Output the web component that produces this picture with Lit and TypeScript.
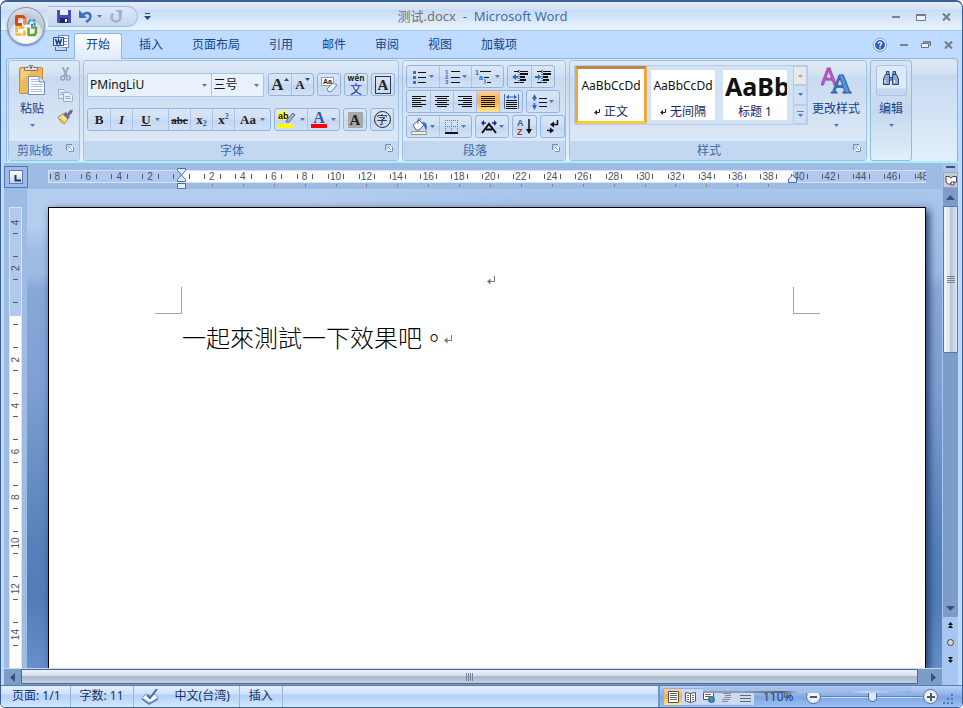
import { LitElement, html, svg, css } from "lit";
import { customElement, property } from "lit/decorators.js";

const UNIT = 15.45;
const VUNIT = 22.9;

const caret = html`<svg class="caret" width="5" height="3" viewBox="0 0 5 3" aria-hidden="true"><path d="M0 0H5L2.5 3Z" fill="#4f78b4" /></svg>`;

const returnMark = html`<svg class="mark" width="8" height="9" viewBox="0 0 8 9" aria-hidden="true"><path d="M7.5 0V5.500H2" fill="none" stroke="#777" /><path d="M0 5.500L3.500 2.500V8.500Z" fill="#777" /></svg>`;

const launcher = (name: string) => html`<button class="launcher" aria-label=${name + "选项"}>
  <svg width="8" height="8" viewBox="0 0 8 8"><path d="M0.5 6V0.5H6" fill="none" stroke="#6d8fbf" /><path d="M3 3H8V8H3Z" fill="#fff" /><path d="M3 3L6 6M7.5 3V7.5H3" fill="none" stroke="#6d8fbf" /></svg>
</button>`;

const lines = (rows: number[][], color = "#111") =>
  rows.map(([x, y, w]) => svg`<path d="M${x} ${y}.5h${w}" stroke=${color} />`);

const icon = (w: number, h: number, body: unknown) =>
  html`<svg width=${w} height=${h} viewBox="0 0 ${w} ${h}" aria-hidden="true">${body}</svg>`;

const icons = {
  office: icon(24, 24, svg`
    <g fill="none" stroke-linejoin="round">
      <path d="M11 10.500V4.500L9 2.500H2.500V10.500H8" stroke="#d9480f" stroke-width="3" />
      <path d="M10 4L11 5.500V10" stroke="#f08a3c" stroke-width="2" />
      <path d="M14.500 10.500V6.500H20.500V11H17" stroke="#2f7fd0" stroke-width="2" stroke-dasharray="3 1" />
      <path d="M10.500 13.500H2.500V20.500H10.500V16" stroke="#f4b62a" stroke-width="2.500" stroke-dasharray="6 1" />
      <path d="M14.500 13.500V21H20.500L22 18.500V13.500H17" stroke="#5fa33b" stroke-width="2.500" />
    </g>`),
  save: icon(14, 14, svg`<path d="M0 1H14V14H1L0 13Z" fill="#4a4bb5" /><path d="M3 1H11V6H3Z" fill="#e8f0ff" /><path d="M3 9H11V14H3Z" fill="#222a66" /><path d="M8 10H10V13H8Z" fill="#fff" />`),
  undo: icon(14, 13, svg`<path d="M3.500 5.500C6 2 11 2 11.500 6C11.500 9 9 11 7 12" fill="none" stroke="#3f6fc4" stroke-width="2.500" /><path d="M0 0V8H8Z" fill="#3f6fc4" />`),
  redo: icon(13, 13, svg`<path d="M3 3.500C-0.500 8 3 11.500 6 11.500C10 11.500 12 7 9 4" fill="none" stroke="#9fb2cc" stroke-width="2.500" /><path d="M5 0H12V6Z" fill="#9fb2cc" />`),
  more: icon(7, 7, svg`<path d="M1 0.500H6" stroke="#23467e" /><path d="M0 3H7L3.500 7Z" fill="#23467e" />`),
  word: icon(16, 16, svg`<path d="M5.500 0.500H15.500V12.500H5.500Z" fill="#fff" stroke="#6d86b8" /><path d="M7 3.500H14M9 6.500H14M7 9.500H14" stroke="#6d86b8" /><path d="M0.500 2.500H10.500V10.500H0.500Z" fill="#d9e6fa" stroke="#2b4f96" /><path d="M2.500 4L4 9L5.500 5L7 9L8.500 4" fill="none" stroke="#1c3f8c" stroke-width="1.500" /><path d="M2.500 12V15.500H13.500V13" fill="#c9d9f2" stroke="#4a68a5" />`),
  min: icon(8, 2, svg`<path d="M0 0H8V2H0Z" fill="#7a818e" />`),
  max: icon(10, 7, svg`<path d="M0.500 0.500H9.500V6.500H0.500Z" fill="#e8f1fc" stroke="#6b7a90" /><path d="M0 1H10" stroke="#6b7a90" stroke-width="2" />`),
  restore: icon(10, 7, svg`<path d="M2 1H9.500V5" fill="none" stroke="#6b7280" stroke-width="1.500" /><path d="M0.500 2.500H7.500V6.500H0.500Z" fill="#e8f1fc" stroke="#6b7280" />`),
  close: icon(9, 8, svg`<path d="M1 0.500L8 7.500M8 0.500L1 7.500" stroke="#757b88" stroke-width="2" />`),
  help: icon(14, 14, svg`<circle cx="7" cy="7" r="6.500" fill="#fff" stroke="#7c97c4" /><circle cx="7" cy="7" r="5" fill="#2a5fc9" /><path d="M5.200 5.500C5.500 3.500 9 3.800 8.500 5.800C8 7 7 6.800 7 8.300M7 9.300V10.600" stroke="#fff" stroke-width="1.400" fill="none" />`),
  paste: icon(27, 31, svg`<rect x="0.500" y="2.500" width="23" height="26" rx="1.500" fill="#edb95c" stroke="#c68c38" /><path d="M2 4L14 4L2 16Z" fill="#f6cf82" /><path d="M5.500 5.500V2.500H9C9 -0.500 15 -0.500 15 2.500H18.500V5.500Z" fill="#e2e2e2" stroke="#7c7466" /><circle cx="12" cy="2.500" r="1.200" fill="#665" /><path d="M9.500 11.500H20L25.500 17V29.500H9.500Z" fill="#fff" stroke="#6f8ebd" /><path d="M20 11.500V17H25.500" fill="#d9e7fa" stroke="#6f8ebd" />${lines([[12, 14, 7], [12, 16, 7], [12, 19, 11], [12, 21, 11], [12, 24, 11], [12, 26, 11]], "#a9bfe0")}`),
  cut: icon(11, 14, svg`<path d="M2.500 0L7 9M8.500 0L4 9" stroke="#97a6be" stroke-width="1.800" /><circle cx="2.800" cy="11" r="2" fill="none" stroke="#97a6be" stroke-width="1.500" /><circle cx="8.200" cy="11" r="2" fill="none" stroke="#97a6be" stroke-width="1.500" />`),
  copy: icon(15, 13, svg`<path d="M0.500 0.500H6L8.500 3V9.500H0.500Z" fill="#e3ecf8" stroke="#98abc9" /><path d="M5.500 3.500H11L14.500 6.500V12.500H5.500Z" fill="#e9f0fa" stroke="#98abc9" />${lines([[2, 3, 3], [2, 5, 3], [7, 7, 5], [7, 9, 6]], "#98abc9")}`),
  brush: icon(16, 14, svg`<path d="M1 7L6 4L11 9L7 14Q3 12 1 7Z" fill="#f1e08b" stroke="#a08a30" /><path d="M3 9L7 12" stroke="#b99c3d" /><path d="M6 4L9 2L13 7L11 9Z" fill="#6d6f88" /><path d="M10 4L13 0H16L15 3L12 6Z" fill="#7a62a8" />`),
  up: icon(5, 3, svg`<path d="M0 3H5L2.500 0Z" fill="#1e4a94" />`),
  down: icon(5, 3, svg`<path d="M0 0H5L2.500 3Z" fill="#1e4a94" />`),
  eraser: icon(17, 17, svg`<rect x="0.500" y="1.500" width="12" height="8" fill="#fff" stroke="#8da0bf" /><text x="2" y="8" font-size="7" font-weight="bold" fill="#222">Aa</text><path d="M6 13L12 7L16 9L10 16Q6 16 6 13Z" fill="#eef2fa" stroke="#7387ad" />`),
  highlighter: icon(18, 17, svg`<path d="M0 0H10V9H0Z" fill="#ffff50" /><text x="0" y="8" font-size="9" fill="#111">ab</text><path d="M9 9L15 2L17 4L11 11L8 11Z" fill="#aebbd0" stroke="#56647e" /><path d="M0 13H16V17H0Z" fill="#ff0" />`),
  bullets: icon(14, 14, svg`<path d="M0 1H3V4H0ZM0 6H3V9H0ZM0 11H3V14H0Z" fill="#416fc0" />${lines([[5, 2, 8], [5, 7, 8], [5, 12, 8]])}`),
  numbers: icon(15, 16, svg`<g font-size="6" font-weight="bold" fill="#3565bd"><text x="0" y="5">1</text><text x="0" y="10">2</text><text x="0" y="15">3</text></g>${lines([[6, 2, 9], [6, 8, 9], [6, 13, 9]])}`),
  multi: icon(18, 16, svg`<g font-size="7" font-weight="bold" fill="#3565bd"><text x="0" y="6">1</text><text x="4" y="11">a</text><text x="9" y="15">i</text></g>${lines([[5, 2, 11], [9, 8, 5], [12, 13, 4]])}`),
  outdent: icon(16, 14, svg`${lines([[2, 1, 5], [8, 1, 8], [2, 12, 5], [8, 12, 4]])}<path d="M8 4H16M8 7H13M8 10H14" stroke="#111" stroke-width="2" /><path d="M7 0V14" stroke="#111" stroke-dasharray="1 1" /><path d="M0 7L4 4V6H6V8H4V10Z" fill="#3565bd" />`),
  indent: icon(16, 14, svg`${lines([[2, 1, 5], [8, 1, 8], [2, 12, 5], [8, 12, 4]])}<path d="M8 4H16M8 7H13M8 10H14" stroke="#111" stroke-width="2" /><path d="M7 0V14" stroke="#111" stroke-dasharray="1 1" /><path d="M6 7L3 4V6H0V8H3V10Z" fill="#3565bd" />`),
  left: icon(14, 11, lines([[0, 0, 14], [0, 2, 9], [0, 4, 14], [0, 6, 9], [0, 8, 14], [0, 10, 10]])),
  center: icon(14, 11, lines([[0, 0, 14], [2, 2, 10], [0, 4, 14], [2, 6, 10], [0, 8, 14], [2, 10, 10]])),
  right: icon(14, 11, lines([[0, 0, 14], [5, 2, 9], [0, 4, 14], [5, 6, 9], [0, 8, 14], [4, 10, 10]])),
  justify: icon(14, 11, lines([[0, 0, 14], [0, 2, 14], [0, 4, 14], [0, 6, 14], [0, 8, 14], [0, 10, 14]])),
  distribute: icon(15, 15, svg`<path d="M0.500 0V15M14.500 0V15" stroke="#50709f" /><path d="M2 3L5 0.500V2.500H10V0.500L13 3L10 5.500V3.500H5V5.500Z" fill="#3565bd" />${lines([[2, 6, 11], [2, 8, 11], [2, 10, 11], [2, 12, 11], [2, 14, 11]])}`),
  spacing: icon(15, 16, svg`<path d="M2.500 2V14" stroke="#3565bd" stroke-width="1.500" stroke-dasharray="5 2" /><path d="M0 5L2.500 0L5 5ZM0 11L2.500 16L5 11Z" fill="#3565bd" />${lines([[7, 4, 8], [7, 8, 8], [7, 12, 8]])}`),
  bucket: icon(17, 17, svg`<path d="M2 7L8 2L13 7L8 12H5Z" fill="#fff" stroke="#4d6694" /><path d="M7 6V1Q9 -1 10 2" fill="none" stroke="#4d6694" /><path d="M11 4Q18 4 15 13L13 8Z" fill="#3e72c4" /><path d="M0.500 13.500H15.500V16.500H0.500Z" fill="#eef0e0" stroke="#99958a" />`),
  borders: icon(14, 14, svg`<path d="M0.500 0V12M6.500 0V12M12.500 0V12M0 0.500H13M0 6.500H13" stroke="#778" stroke-dasharray="1 1" /><path d="M0 13H13" stroke="#111" stroke-width="2" />`),
  scale: icon(16, 14, svg`<path d="M0 3L3 0V6ZM16 3L13 0V6Z" fill="#202a90" /><path d="M2 3H5M11 3H14" stroke="#202a90" stroke-width="1.500" /><path d="M1 13L8 4L15 13M5 9.500H11" fill="none" stroke="#111" stroke-width="2" />`),
  sort: icon(15, 18, svg`<text x="0" y="8" font-size="9" font-weight="bold" fill="#2e59ad">A</text><text x="0" y="17" font-size="9" font-weight="bold" fill="#a33">Z</text><path d="M12 1V14" stroke="#111" stroke-width="1.500" /><path d="M9 11H15L12 16Z" fill="#111" />`),
  marks: icon(12, 14, svg`<path d="M10.500 0V4.500H6M0 10.500H4" fill="none" stroke="#111" stroke-width="1.500" /><path d="M3 4.500L7 1.500V7.500ZM7 10.500L3 7.500V13.500Z" fill="#111" />`),
  styles: icon(31, 31, svg`<text x="0" y="20" font-size="23" fill="#c565cf" stroke="#a04cae">A</text><text x="10" y="28" font-size="28" font-family="Liberation Serif" font-weight="bold" fill="#5d93e0" stroke="#2b5cab">A</text>`),
  find: icon(16, 15, svg`<g fill="#8ba7d8" stroke="#23427f"><path d="M2.500 3.500H6.500V13.500H0.500V8Z" /><path d="M9.500 3.500H13.500L15.500 8V13.500H9.500Z" /><path d="M3.500 0.500H6V3.500H3.500ZM10 0.500H12.500V3.500H10Z" /><path d="M6.500 6.500H9.500V9H6.500Z" /></g><path d="M2 9V12M11.500 9V12" stroke="#fff" />`),
  check: icon(18, 16, svg`<path d="M1 9L5 5L9 7L14 5L17 9L9 14Z" fill="#f4f7fc" stroke="#8296b8" /><path d="M1 10L8 15L17 10" fill="none" stroke="#6780aa" stroke-width="1.500" /><path d="M6 6L9 9L16 0" fill="none" stroke="#3b6fc5" stroke-width="2" />`),
  vPrint: icon(11, 12, svg`<path d="M0.500 0.500H10.500V11.500H0.500Z" fill="#fff" stroke="#555" />${lines([[2, 2, 7], [2, 4, 7], [2, 6, 7], [2, 8, 7]], "#666")}`),
  vRead: icon(12, 12, svg`<path d="M0.500 1.500L5.500 2.500V11.500L0.500 10ZM10.500 1.500L5.500 2.500V11.500L10.500 10Z" fill="#fff" stroke="#555" />${lines([[2, 4, 2], [2, 6, 2], [2, 8, 2], [7, 4, 2], [7, 6, 2], [7, 8, 2]], "#666")}`),
  vWeb: icon(13, 12, svg`<path d="M0.500 0.500H10.500V8.500H0.500Z" fill="#fff" stroke="#555" />${lines([[2, 3, 6], [2, 5, 6]], "#666")}<circle cx="8.500" cy="8.500" r="3.500" fill="#3a78b8" /><path d="M7 7H10L9 11Z" fill="#57ab55" />`),
  vOutline: icon(10, 10, lines([[1, 1, 8], [3, 3, 6], [2, 5, 7], [0, 7, 8], [0, 9, 6]], "#889")),
  vDraft: icon(11, 10, lines([[0, 0, 11], [0, 3, 11], [0, 6, 11], [0, 9, 11]], "#667")),
};

@customElement("page-ruler")
class PageRuler extends LitElement {
  @property() axis = "x";

  static styles = css`
    :host { display: block; overflow: hidden; }
    .scale { display: block; font: 10px "Liberation Sans", sans-serif; fill: #4a5162; }
    .tick { stroke: #555c70; }
    .stop { stroke: #8a8a8a; }
  `;

  horizontal() {
    const zero = 134;
    const odd = Array.from({ length: 57 }, (_, i) => zero + Math.round((i - 8.5) * UNIT));
    const even = Array.from({ length: 29 }, (_, i) => (i - 4) * 2).filter((n) => n !== 0);
    return html`<svg class="scale" width="100%" height="26">
      <rect x="0" y="7" width="100%" height="13" fill="#d5e4f8" />
      <rect x="1" y="8" width="100%" height="11" fill="#b1c9ec" />
      <rect x=${zero} y="8" width="611" height="11" fill="#fff" />
      ${odd.map((x) => svg`<path class="tick" d="M${x - 1}.5 11V16" />`)}
      ${even.map((n) => svg`<text x=${zero + n * UNIT - 1} y="17" text-anchor="middle">${Math.abs(n)}</text>`)}
      ${even.filter((n) => n > 0 && n < 40).map((n) => svg`<path class="stop" d="M${zero + Math.round(n * UNIT) - 1}.5 21V24" />`)}
      <g fill="#e4edfa" stroke="#4a70ae">
        <path d="M129.500 5.500H137.500V7.500L129.500 16.500V18.500H137.500V16.500L129.500 7.500Z" />
        <path d="M129.500 20.500H137.500V25.500H129.500Z" />
        <path d="M740.500 19.500H748.500V16L744.500 12L740.500 16Z" />
      </g>
    </svg>`;
  }

  vertical() {
    const zero = 107;
    const ticks = Array.from({ length: 19 }, (_, i) => zero + Math.round((i - 3.5) * VUNIT));
    const even = Array.from({ length: 10 }, (_, i) => (i - 2) * 2).filter((n) => n !== 0);
    return html`<svg class="scale" width="13" height="100%">
      <rect x="0" y="0" width="13" height="100%" fill="#d5e4f8" />
      <rect x="1" y="1" width="11" height="108" fill="#b1c9ec" />
      <rect x="1" y="109" width="11" height="100%" fill="#fff" />
      ${ticks.map((y) => svg`<path class="tick" d="M4 ${y - 1}.5H9" />`)}
      ${even.map((n) => svg`<text transform="translate(10 ${zero + n * VUNIT}) rotate(-90)" text-anchor="middle">${Math.abs(n)}</text>`)}
    </svg>`;
  }

  render() {
    return this.axis === "x" ? this.horizontal() : this.vertical();
  }
}

@customElement("app-root")
class AppRoot extends LitElement {
  static styles = css`
    :host {
      display: flex; flex-direction: column; box-sizing: border-box; height: 100vh; min-height: 400px; overflow: hidden;
      font: 12px/16px "Noto Sans", "Noto Sans CJK SC", sans-serif; color: #15428b;
      background: #bfdbff; border: 1px solid #3b5f98; border-width: 2px 1px 1px; border-radius: 7px 7px 5px 5px;
    }
    * { box-sizing: border-box; }
    button, select { font: inherit; color: inherit; margin: 0; padding: 0; border: 0; background: none; appearance: none; border-radius: 0; }
    button { display: flex; align-items: center; justify-content: center; gap: 4px; }
    svg { display: block; flex: none; font-family: "Liberation Sans", sans-serif; }

    .title { position: relative; flex: none; height: 29px; display: flex; align-items: center; border-bottom: 1px solid #a5cdf0;
      background: linear-gradient(#e4ecf8 0, #d5e2f5 7px, #c9dcf4 8px, #e8f3ff 100%); }
    .quick { display: flex; align-items: center; gap: 8px; width: 90px; height: 21px; margin-left: 47px; padding-left: 9px;
      border: 1px solid #9dbbe0; border-left: 0; border-radius: 0 11px 11px 0; background: linear-gradient(#dce8f7, #c4d7f0); }
    .more { margin-left: 6px; }
    .name { flex: 1; margin: 0; font-size: 13px; font-weight: normal; text-align: center; line-height: 18px; color: #3e6db5; }
    .file { color: #74746c; }
    .window-buttons { display: flex; align-items: center; gap: 16px; padding: 2px 11px 0 0; width: 148px; justify-content: flex-end; }
    .office { position: absolute; left: 6px; top: 5px; width: 38px; height: 38px; border-radius: 50%; z-index: 2; border: 1px solid #8792a5;
      background: radial-gradient(circle at 50% 75%, #fff 15%, #dbe2ec 50%, #b9c3d2 52%, #e8edf4 95%); box-shadow: 0 1px 2px #5f7ba7; }

    .tabs { flex: none; height: 27px; display: flex; align-items: flex-end; padding: 0 9px 0 52px; background: #bfdbff; }
    .word { margin: 0 5px 7px 0; }
    .tablist { display: flex; gap: 5px; flex: 1; }
    .tab { height: 25px; padding: 0 12px; color: #15428b; text-decoration: none; line-height: 24px; white-space: nowrap; }
    .tab.current { position: relative; height: 26px; margin-bottom: -1px; border: 1px solid #8fb5e3; border-bottom: 0; border-radius: 3px 3px 0 0; padding: 0 11px;
      background: linear-gradient(#fdfeff, #dfeafa); line-height: 22px; }
    .doc-buttons { display: flex; align-items: center; gap: 13px; height: 27px; }

    .ribbon { flex: none; display: flex; gap: 3px; margin: 0 4px 0 5px; padding: 1px; height: 105px; border: 1px solid #8db2e3; border-bottom: 2px solid #aeeef8; border-radius: 4px;
      background: linear-gradient(#dde8f5 0, #d2e0f2 15px, #c6d9ef 16px, #e2f0fb 100%); }
    .group { display: flex; flex-direction: column; height: 101px; flex: none; border: 1px solid #a3c1e3; border-radius: 3px;
      background: linear-gradient(#dfeaf7 0, #d3e1f2 15px, #c9dbf0 16px, #dbe8f7 80px); }
    .content { flex: 1; padding: 4px 3px 0; }
    .caption { position: relative; flex: none; display: flex; align-items: center; justify-content: center; height: 19px; padding-right: 18px; color: #3e6aaa; background: #c1d8f0; }
    .launcher { position: absolute; right: 5px; top: 3px; }
    .clipboard { width: 72px; }
    .font { width: 316px; }
    .paragraph { width: 164px; }
    .style-group { width: 298px; }
    .editing { width: 42px; background: linear-gradient(#d9e5f4 0, #c5d8ee 50px, #dff0fc); border-color: #92bdd9; }
    .paste-row { display: flex; gap: 8px; padding-left: 6px; }
    .big { flex-direction: column; justify-content: flex-start; gap: 0; width: 34px; }
    .big .label { line-height: 18px; margin: 4px 0 6px; white-space: nowrap; }
    .small-icons { display: flex; flex-direction: column; align-items: center; gap: 8px; padding-top: 2px; width: 16px; }

    .row { display: flex; gap: 3px; height: 23px; }
    .row-top { margin: 8px 0 12px; }
    .row-tight { margin-bottom: 2px; }
    .cluster { display: flex; border: 1px solid #94b3de; border-radius: 3px; background: linear-gradient(#d9e6f6 0, #d0dff3 10px, #c3d7f1 11px, #d2e2f6); }
    .cell { width: 22px; border-left: 1px solid #a9c3e6; font-family: "Liberation Serif", serif; font-weight: bold; font-size: 13px; color: #222; }
    .cell:first-child { border-left: 0; }
    .wide { width: 36px; }
    .mid { width: 32px; }
    .paragraph .cell { width: 23px; }
    .paragraph .wide { width: 32px; gap: 2px; }
    .on { background: linear-gradient(#f9d3a1, #f8ab4e 45%, #fde58c); }
    .combo { display: flex; align-items: center; background: #e9f2fc; border: 1px solid #abc4e4; height: 24px; color: #111; }
    .combo + .combo { border-left: 0; margin-left: -3px; }
    .field { position: relative; display: flex; align-items: center; width: 100%; }
    .field select { width: 100%; height: 22px; padding-left: 2px; font-size: 12px; }
    .field .caret { position: absolute; right: 4px; }
    .font-name { width: 126px; }
    .font-size { width: 53px; }
    .push { margin-left: 1px; }
    .letter { line-height: 18px; }
    .large { font-size: 17px; }
    .ital { font-style: italic; }
    .under { text-decoration: underline; }
    .strike { text-decoration: line-through; font-size: 11px; }
    .tip { align-self: flex-start; margin-top: 4px; }
    .digit { font-size: 8px; color: #2b5fb8; line-height: 8px; }
    .sub { align-self: flex-end; margin-bottom: 2px; }
    .sup { align-self: flex-start; margin-top: 4px; }
    .near { gap: 0; }
    .pinyin { display: flex; flex-direction: column; font: bold 8px/8px "Open Sans", sans-serif; align-items: center; }
    .han { font: 12px/13px "Noto Sans CJK SC", sans-serif; color: #2034b0; }
    .boxed { border: 1px solid #335; width: 16px; line-height: 16px; font-size: 15px; }
    .shaded { background: #a9a9a9; width: 15px; line-height: 16px; font-size: 15px; }
    .ring { border: 1px solid #222; border-radius: 50%; width: 17px; height: 17px; font: 11px/14px "Noto Sans CJK SC", sans-serif; }
    .tint { color: #2f58a5; border-bottom: 4px solid #f00; line-height: 13px; width: 16px; font-size: 16px; }

    .style-row { display: flex; gap: 3px; padding-left: 1px; }
    .gallery { display: flex; height: 60px; border: 1px solid #b7cee9; background: #d3e3f6; width: 234px; }
    .sample { flex-direction: column; gap: 0; width: 72px; height: 58px; border: 4px solid transparent; background: #fff padding-box; overflow: hidden; color: #111; justify-content: flex-end; }
    .sample.chosen { border: 3px solid #f0a63c; border-top-color: #b8864f; border-bottom-color: #fbc93d; border-radius: 2px; padding-bottom: 1px; }
    .demo { line-height: 16px; margin-bottom: 9px; }
    .heading-demo { font-size: 25px; font-weight: bold; line-height: 28px; margin-bottom: 3px; align-self: flex-start; padding-left: 2px; }
    .style-name { display: flex; align-items: center; gap: 4px; color: #14286e; line-height: 17px; }
    .arrows { display: flex; flex-direction: column; width: 14px; margin-left: auto; }
    .arrows button { flex: 1; border: 1px solid #b7cee9; background: #cfe0f5; flex-direction: column; gap: 2px; }
    .arrows button:first-child { background: #e9e9e9; }
    .change { width: 50px; }
    .find-box { display: flex; justify-content: center; align-items: flex-start; padding-top: 5px; width: 31px; height: 31px; border: 1px solid #a9c3e3; border-radius: 3px; background: linear-gradient(#dfeaf8 22px, #c3d7ee 23px); }

    .work { flex: 1; min-height: 0; display: grid; grid-template: 26px minmax(0, 1fr) 17px / 23px minmax(0, 1fr) 16px; margin: 0 4px 0 3px; background: #9dbbe3; }
    .selector { width: 24px; height: 22px; margin-top: 3px; border: 1px solid #4a74c4; }
    .selector-face { display: block; width: 14px; height: 14px; border: 1px solid #5a7cbc; background: linear-gradient(#fff, #c3d4ee); padding: 4px 0 0 4px; }
    .hruler { margin: 0 16px 0 21px; }
    .vruler { margin: 18px 0 0 5px; width: 13px; }
    .canvas { position: relative; display: flex; overflow: hidden; background:
      radial-gradient(ellipse 500px 60px at 0 0, #b5cdee 0 60%, transparent 100%),
      linear-gradient(#a9c6eb 0, #9dbae3 85px, #88a8d8 100px, #7d9fd2 200px, #5580b9 360px, #527db6 410px, #6690cc 100%); }
    .page { flex: 1; margin: 18px 16px 0 21px; background: #fff; border: 1px solid #000; border-bottom: 0; box-shadow: 3px 3px 8px #1d3968; padding: 68px 105px 0 106px; color: #000; }
    .header { display: flex; justify-content: center; padding-left: 6px; height: 11px; }
    .corners { display: flex; justify-content: space-between; }
    .corner { width: 27px; height: 27px; border: 1px solid #a5a5a5; border-width: 0 1px 1px 0; }
    .corner.end { border-width: 0 0 1px 1px; }
    .text { display: flex; align-items: center; margin: 5px 0 0 27px; font: 300 24px/36px "Noto Sans CJK TC", sans-serif; white-space: nowrap; }
    .text .mark { margin: 5px 0 0 -2px; }
    .vbar { grid-row: 1 / 4; grid-column: 3; display: flex; flex-direction: column; background: #7c9cca; border: solid #a5c5f0; border-width: 0 0 0 1px; }
    .split { height: 9px; background: #a5c5f0; padding: 3px 3px 0 3px; }
    .split-grip { display: block; height: 2px; background: #46516e; }
    .toggle { height: 16px; background: #c9ccd6; border: 1px solid #a0a4b2; }
    .step { height: 18px; }
    .thumb { height: 147px; border: 1px solid #5b77a8; border-radius: 1px; background: linear-gradient(90deg, #f3f6fb, #dbe3ee 45%, #b7c4d6 50%, #dce6f2); }
    .track { flex: 1; }
    .browse { height: 68px; background: #a8c6f2; display: flex; flex-direction: column; align-items: center; gap: 11px; padding-top: 5px; }
    .hbar { grid-column: 1 / 3; display: flex; background: #7c9cca; border-top: 1px solid #c3daf8; }
    .hbar .step { width: 17px; height: 16px; }
    .hthumb { flex: 1; height: 15px; border: 1px solid #53658a; border-radius: 1px; background: linear-gradient(#edf1f7, #d7dee9 45%, #a9b8cd 50%, #c5d1e2); }
    .hbar .end { width: 24px; padding-left: 6px; }

    .status { position: relative; flex: none; display: flex; height: 22px; border-top: 1px solid #557bb3; color: #14306e; background: linear-gradient(#e1eefd 0, #cfe2fb 8px, #b3d0f7 9px, #d4e7ff); }
    .item { display: flex; align-items: center; padding: 0 9px 2px; border-right: 1px solid #95b5e2; white-space: nowrap; }
    .item:first-child { padding-left: 11px; }
    .item.proof { padding: 0 7px; border: 0; }
    .right { display: flex; align-items: center; margin-left: auto; width: 304px; padding-left: 3px; border-left: 2px solid #6f95cf; background: linear-gradient(#b9d3f6, #87ade6 10px, #7ba4e2 11px, #9ec2f3); }
    .views { display: flex; height: 18px; margin-top: 1px; border: 1px solid #8fb0e0; background: #c9daf2; }
    .view { width: 18px; }
    .percent { width: 51px; padding-left: 8px; color: #243c70; }
    .round { width: 15px; height: 15px; border: 1px solid #5e7292; border-radius: 50%; background: radial-gradient(#fff, #d3deed); }
    .zoom { appearance: none; width: 102px; height: 15px; margin: 0; background: linear-gradient(#5f80b3, #5f80b3) 0 7px / 100% 1px no-repeat, linear-gradient(#c9defa, #c9defa) 0 8px / 100% 1px no-repeat; }
    .zoom::-webkit-slider-thumb { appearance: none; width: 9px; height: 11px; border: 1px solid #4e6b9c; background: #dce8fa; border-radius: 1px 1px 5px 5px; }
    .sheen { position: absolute; left: 702px; top: 1px; width: 208px; height: 6px; background: linear-gradient(90deg, #8d9bb5 0 20%, #5b5f6b 38%, #a9bfe0 46%, #9cb8e2 70%, #bcd6f4 78%, #8aaee2) 0 4px / 100% 2px no-repeat, #a3c0ec; }
    .grip { margin: 4px 0 0 4px; }
  `;

  cell(label: string, content: unknown, arrow = false, extra = "") {
    return html`<button class="cell ${arrow ? "wide" : ""} ${extra}" aria-label=${label}>${content}${arrow ? caret : ""}</button>`;
  }

  fontGroup() {
    return html`<section class="group font">
      <div class="content">
        <div class="row row-top">
          <div class="combo font-name"><label class="field"><select aria-label="字体"><option>PMingLiU</option></select>${caret}</label></div>
          <div class="combo font-size"><label class="field"><select aria-label="字号"><option>三号</option></select>${caret}</label></div>
          <div class="cluster push">${this.cell("增大字体", html`<span class="letter large">A</span><span class="tip">${icons.up}</span>`, false, "near")}${this.cell("缩小字体", html`<span class="letter">A</span><span class="tip">${icons.down}</span>`, false, "near")}</div>
          <div class="cluster">${this.cell("清除格式", icons.eraser)}</div>
          <div class="cluster">${this.cell("拼音指南", html`<span class="pinyin">wén<span class="han">文</span></span>`)}</div>
          <div class="cluster">${this.cell("字符边框", html`<span class="boxed">A</span>`)}</div>
        </div>
        <div class="row">
          <div class="cluster">
            ${this.cell("加粗", "B")}${this.cell("倾斜", html`<span class="ital">I</span>`)}
            ${this.cell("下划线", html`<span class="under">U</span>`, true)}
            ${this.cell("删除线", html`<span class="strike">abc</span>`)}
            ${this.cell("下标", html`x<span class="digit sub">2</span>`, false, "near")}
            ${this.cell("上标", html`x<span class="digit sup">2</span>`, false, "near")}
            ${this.cell("更改大小写", "Aa", true)}
          </div>
          <div class="cluster">${this.cell("突出显示", icons.highlighter, true, "mid")}${this.cell("字体颜色", html`<span class="tint">A</span>`, true, "mid")}</div>
          <div class="cluster">${this.cell("字符底纹", html`<span class="shaded">A</span>`)}</div>
          <div class="cluster">${this.cell("带圈字符", html`<span class="ring">字</span>`)}</div>
        </div>
      </div>
      <div class="caption">字体${launcher("字体")}</div>
    </section>`;
  }

  paragraphGroup() {
    return html`<section class="group paragraph">
      <div class="content">
        <div class="row row-tight">
          <div class="cluster">${this.cell("项目符号", icons.bullets, true)}${this.cell("编号", icons.numbers, true)}${this.cell("多级列表", icons.multi, true)}</div>
          <div class="cluster">${this.cell("减少缩进量", icons.outdent)}${this.cell("增加缩进量", icons.indent)}</div>
        </div>
        <div class="row row-tight">
          <div class="cluster">${this.cell("左对齐", icons.left)}${this.cell("居中", icons.center)}${this.cell("右对齐", icons.right)}${this.cell("两端对齐", icons.justify, false, "on")}${this.cell("分散对齐", icons.distribute)}</div>
          <div class="cluster">${this.cell("行距", icons.spacing, true)}</div>
        </div>
        <div class="row">
          <div class="cluster">${this.cell("底纹", icons.bucket, true)}${this.cell("边框", icons.borders, true)}</div>
          <div class="cluster">${this.cell("中文版式", icons.scale, true)}</div>
          <div class="cluster">${this.cell("排序", icons.sort)}</div>
          <div class="cluster">${this.cell("显示编辑标记", icons.marks)}</div>
        </div>
      </div>
      <div class="caption">段落${launcher("段落")}</div>
    </section>`;
  }

  stylesGroup() {
    const pilcrow = icon(6, 6, svg`<path d="M5.500 0V3.500H2" fill="none" stroke="#223" /><path d="M0 3.500L3 1V6Z" fill="#223" />`);
    return html`<section class="group style-group">
      <div class="content">
        <div class="style-row">
          <div class="gallery">
            <button class="sample chosen"><span class="demo">AaBbCcDd</span><span class="style-name">${pilcrow}正文</span></button>
            <button class="sample"><span class="demo">AaBbCcDd</span><span class="style-name">${pilcrow}无间隔</span></button>
            <button class="sample"><span class="heading-demo">AaBb</span><span class="style-name">标题 1</span></button>
            <div class="arrows">
              <button aria-label="上一行">${icon(5, 3, svg`<path d="M0 3H5L2.500 0Z" fill="#aaa" />`)}</button>
              <button aria-label="下一行">${caret}</button>
              <button aria-label="其他样式">${icon(7, 1, svg`<path d="M0 0.500H7" stroke="#5a7fb5" />`)}${caret}</button>
            </div>
          </div>
          <button class="big change">${icons.styles}<span class="label">更改样式</span>${caret}</button>
        </div>
      </div>
      <div class="caption">样式${launcher("样式")}</div>
    </section>`;
  }

  render() {
    const tabs = ["开始", "插入", "页面布局", "引用", "邮件", "审阅", "视图", "加载项"];
    return html`
      <header class="title">
        <button class="office" aria-label="Office 按钮">${icons.office}</button>
        <div class="quick">
          <button aria-label="保存">${icons.save}</button>
          <button aria-label="撤消">${icons.undo}${caret}</button>
          <button aria-label="重复">${icons.redo}</button>
        </div>
        <button class="more" aria-label="自定义快速访问工具栏">${icons.more}</button>
        <h1 class="name"><span class="file">测试.docx</span>&nbsp; -&nbsp; Microsoft Word</h1>
        <div class="window-buttons">
          <button aria-label="最小化">${icons.min}</button><button aria-label="最大化">${icons.max}</button><button aria-label="关闭">${icons.close}</button>
        </div>
      </header>
      <nav class="tabs">
        <span class="word">${icons.word}</span>
        <div class="tablist">${tabs.map((t, i) => html`<a class="tab ${i === 0 ? "current" : ""}" href="#">${t}</a>`)}</div>
        <div class="doc-buttons">
          <button aria-label="帮助">${icons.help}</button><button aria-label="最小化文档">${icons.min}</button><button aria-label="还原文档">${icons.restore}</button><button aria-label="关闭文档">${icons.close}</button>
        </div>
      </nav>
      <div class="ribbon">
        <section class="group clipboard">
          <div class="content paste-row">
            <button class="big">${icons.paste}<span class="label">粘贴</span>${caret}</button>
            <div class="small-icons"><button aria-label="剪切">${icons.cut}</button><button aria-label="复制">${icons.copy}</button><button aria-label="格式刷">${icons.brush}</button></div>
          </div>
          <div class="caption">剪贴板${launcher("剪贴板")}</div>
        </section>
        ${this.fontGroup()}${this.paragraphGroup()}${this.stylesGroup()}
        <section class="group editing">
          <div class="content">
            <button class="big"><span class="find-box">${icons.find}</span><span class="label">编辑</span>${caret}</button>
          </div>
        </section>
      </div>
      <main class="work">
        <button class="selector" aria-label="制表符"><span class="selector-face"><svg width="7" height="7" viewBox="0 0 7 7"><path d="M1.500 0V5.500H7" fill="none" stroke="#1f3765" stroke-width="2" /></svg></span></button>
        <page-ruler class="hruler" axis="x"></page-ruler>
        <page-ruler class="vruler" axis="y"></page-ruler>
        <div class="canvas">
          <article class="page">
            <div class="header">${returnMark}</div>
            <div class="corners"><span class="corner"></span><span class="corner end"></span></div>
            <p class="text">一起來測試一下效果吧。${returnMark}</p>
          </article>
        </div>
        <div class="vbar">
          <div class="split"><span class="split-grip"></span></div>
          <button class="toggle" aria-label="标尺">${icon(12, 12, svg`<path d="M1 2.500H4L6 4L8 2.500H11.500V8L7 8.500L4 10.500L1 8Z" fill="#fff" stroke="#445" /><path d="M6 8H9V11H6Z" fill="#fff" stroke="#445" />`)}</button>
          <button class="step" aria-label="向上滚动">${icon(9, 5, svg`<path d="M0 5H9L4.500 0Z" fill="#3d4f7c" />`)}</button>
          <button class="thumb" aria-label="垂直滚动块">${icon(8, 8, svg`<path d="M0 0.500H8M0 2.500H8M0 4.500H8M0 6.500H8" stroke="#76839a" />`)}</button>
          <div class="track"></div>
          <button class="step" aria-label="向下滚动">${icon(9, 5, svg`<path d="M0 0H9L4.500 5Z" fill="#3d4f7c" />`)}</button>
          <div class="browse">
            <button aria-label="前一页">${icon(5, 6, svg`<path d="M0 3H5L2.500 0ZM0 6H5L2.500 3Z" fill="#111" />`)}</button>
            <button aria-label="选择浏览对象">${icon(7, 7, svg`<circle cx="3.500" cy="3.500" r="3" fill="#d8d6c8" stroke="#444" />`)}</button>
            <button aria-label="下一页">${icon(5, 6, svg`<path d="M0 0H5L2.500 3ZM0 3H5L2.500 6Z" fill="#111" />`)}</button>
          </div>
        </div>
        <div class="hbar">
          <button class="step" aria-label="向左滚动">${icon(5, 9, svg`<path d="M5 0V9L0 4.500Z" fill="#3d4f7c" />`)}</button>
          <button class="hthumb" aria-label="水平滚动块">${icon(9, 8, svg`<path d="M1.500 0V8M3.500 0V8M5.500 0V8M7.500 0V8" stroke="#76839a" />`)}</button>
          <button class="step end" aria-label="向右滚动">${icon(5, 9, svg`<path d="M0 0V9L5 4.500Z" fill="#3d4f7c" />`)}</button>
        </div>
      </main>
      <footer class="status">
        <button class="item">页面: 1/1</button>
        <button class="item">字数: 11</button>
        <button class="item proof" aria-label="校对">${icons.check}</button>
        <button class="item">中文(台湾)</button>
        <button class="item">插入</button>
        <div class="right">
          <div class="views">
            <button class="view on" aria-label="页面视图">${icons.vPrint}</button><button class="view" aria-label="阅读版式视图">${icons.vRead}</button><button class="view" aria-label="Web 版式视图">${icons.vWeb}</button><button class="view" aria-label="大纲视图">${icons.vOutline}</button><button class="view" aria-label="普通视图">${icons.vDraft}</button>
          </div>
          <span class="percent">110%</span>
          <button class="round" aria-label="缩小">${icon(7, 2, svg`<path d="M0 0H7V2H0Z" fill="#4a5a75" />`)}</button>
          <input class="zoom" type="range" min="10" max="190" value="100" aria-label="显示比例" />
          <button class="round" aria-label="放大">${icon(8, 8, svg`<path d="M0 4H8M4 0V8" stroke="#4a5a75" stroke-width="2" />`)}</button>
          <span class="grip">${icon(12, 12, svg`<path d="M9 1H11V3H9ZM5 5H7V7H5ZM9 5H11V7H9ZM1 9H3V11H1ZM5 9H7V11H5ZM9 9H11V11H9Z" fill="#5579b5" />`)}</span>
        </div>
        <span class="sheen"></span>
      </footer>
    `;
  }
}
